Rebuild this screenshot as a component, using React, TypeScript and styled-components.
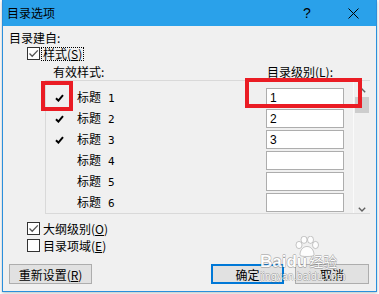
import React from 'react';
import styled, { createGlobalStyle } from 'styled-components';

const GlobalStyle = createGlobalStyle`
  html, body {
    margin: 0;
    padding: 0;
    background: #ffffff;
  }
  body {
    font-family: "Noto Sans CJK SC", "Liberation Sans", sans-serif;
    font-size: 12px;
    color: #000;
  }
`;

const levels = ['1', '2', '3', '', '', ''];

const Check = ({ color = '#3a3a3a' }: { color?: string }) => (
  <svg width="11" height="11" viewBox="0 0 11 11">
    <polyline points="1.5,5.5 4.2,8.2 9.8,2.4" fill="none" stroke={color} strokeWidth="1.3" />
  </svg>
);

const Tick = () => (
  <svg width="9" height="8" viewBox="0 0 9 8">
    <path d="M1 4.2 L3.4 6.6 L8 1.2" fill="none" stroke="#000" strokeWidth="2" />
  </svg>
);

const Chevron = ({ up }: { up?: boolean }) => (
  <svg width="8" height="5" viewBox="0 0 8 5">
    <polyline
      points={up ? '0.8,4.2 4,1 7.2,4.2' : '0.8,0.8 4,4 7.2,0.8'}
      fill="none"
      stroke="#606060"
      strokeWidth="1.4"
    />
  </svg>
);

const Paw = () => (
  <svg width="26" height="22" viewBox="0 0 26 22">
    <g fill="#ffffff" stroke="rgba(110,110,110,0.45)" strokeWidth="0.9">
      <ellipse cx="5" cy="9" rx="3" ry="3.6" />
      <ellipse cx="10" cy="3.8" rx="3" ry="3.6" />
      <ellipse cx="16.5" cy="3.8" rx="3" ry="3.6" />
      <ellipse cx="21.5" cy="9" rx="3" ry="3.6" />
      <path d="M6 19 C6 13, 10 10.5, 13 10.5 C16 10.5, 20 13, 20 19 C20 21, 6 21, 6 19 Z" />
    </g>
  </svg>
);

const App = () => {
  return (
    <Page>
      <GlobalStyle />
      <Window>
        <TitleBar>
          <Title>目录选项</Title>
          <TitleButton>?</TitleButton>
          <TitleButton>
            <svg width="11" height="11" viewBox="0 0 11 11">
              <path d="M0.5 0.5 L10.5 10.5 M10.5 0.5 L0.5 10.5" stroke="#000" strokeWidth="1" />
            </svg>
          </TitleButton>
        </TitleBar>
        <Body>
          <Label>目录建自:</Label>
          <CheckRow $indent={18}>
            <Box>
              <Check color="#555" />
            </Box>
            <Focused>
              样式(<U>S</U>)
            </Focused>
          </CheckRow>
          <HeaderRow>
            <Label>有效样式:</Label>
            <Label>
              目录级别(<U>L</U>):
            </Label>
          </HeaderRow>
          <Panel>
            <List>
              {levels.map((lvl, i) => (
                <Row key={i}>
                  <TickCell>{lvl && <Tick />}</TickCell>
                  <StyleName>
                    标题<Num>{i + 1}</Num>
                  </StyleName>
                  <LevelInput readOnly value={lvl} />
                </Row>
              ))}
            </List>
            <ScrollBar>
              <ArrowBtn $pad={7}>
                <Chevron up />
              </ArrowBtn>
              <Thumb />
              <Track />
              <ArrowBtn $pad={10}>
                <Chevron />
              </ArrowBtn>
            </ScrollBar>
          </Panel>
          <CheckRow $indent={18} $top={7}>
            <Box>
              <Check color="#555" />
            </Box>
            <BoxLabel>
              大纲级别(<U>O</U>)
            </BoxLabel>
          </CheckRow>
          <CheckRow $indent={18} $top={2}>
            <Box />
            <BoxLabel>
              目录项域(<U>E</U>)
            </BoxLabel>
          </CheckRow>
          <ButtonRow>
            <Button $width={83}>
              重新设置(<U>R</U>)
            </Button>
            <ButtonGroup>
              <Button $width={73} $primary>
                确定
              </Button>
              <Button $width={74}>取消</Button>
            </ButtonGroup>
          </ButtonRow>
        </Body>
      </Window>

      {/* 标注框 */}
      <Marker style={{ left: 41, top: 81, width: 32, height: 30 }} />
      <Marker style={{ left: 245, top: 78, width: 117, height: 30 }} />

      <Watermark>
        <PawWrap>
          <Paw />
        </PawWrap>
        <Brand>
          Bai<span>du</span>
          <Cn>经验</Cn>
        </Brand>
        <Site>jingyan.baidu.com</Site>
      </Watermark>
    </Page>
  );
};

const Page = styled.div`
  position: relative;
  width: 379px;
  height: 294px;
  overflow: hidden;
  padding-left: 2px;
  box-sizing: border-box;
  background: #ffffff;
`;

const Window = styled.div`
  width: 375px;
  height: 292px;
  box-sizing: border-box;
  display: flex;
  flex-direction: column;
  border: 1px solid #2a8fdc;
  border-top: none;
  background: #f0f0f0;
  box-shadow: 0 1px 3px rgba(0, 0, 0, 0.28);
`;

const TitleBar = styled.div`
  height: 26px;
  flex-shrink: 0;
  display: flex;
  align-items: center;
  padding-left: 4px;
  background: #2aa1ea;
`;

const Title = styled.div`
  flex: 1;
  font-size: 12px;
  line-height: 16px;
`;

const TitleButton = styled.div`
  width: 46px;
  height: 26px;
  display: flex;
  align-items: center;
  justify-content: center;
  font-family: "Liberation Sans", sans-serif;
  font-size: 14px;
`;

const Body = styled.div`
  flex: 1;
  display: flex;
  flex-direction: column;
  padding: 4px 7px 0 6px;
`;

const Label = styled.div`
  font-size: 12px;
  line-height: 16px;
  height: 16px;
  white-space: nowrap;
`;

const U = styled.span`
  text-decoration: underline;
`;

const CheckRow = styled.div<{ $indent: number; $top?: number }>`
  display: flex;
  align-items: center;
  height: 15px;
  margin-left: ${(p) => p.$indent}px;
  margin-top: ${(p) => p.$top ?? 0}px;
`;

const Box = styled.div`
  width: 13px;
  height: 13px;
  box-sizing: border-box;
  border: 1px solid #333;
  background: #fff;
  display: flex;
  align-items: center;
  justify-content: center;
`;

const BoxLabel = styled.span`
  margin-left: 3px;
  line-height: 15px;
  white-space: nowrap;
`;

const Focused = styled(BoxLabel)`
  margin-left: 2px;
  padding: 0 1px;
  line-height: 12px;
  outline: 1px dotted #000;
`;

const HeaderRow = styled.div`
  margin-top: 3px;
  padding-left: 44px;
  display: grid;
  grid-template-columns: 214px auto;
`;

const Panel = styled.div`
  margin-left: 36px;
  width: 325px;
  height: 134px;
  box-sizing: border-box;
  display: flex;
  border: 1px solid #d9d9d9;
  border-right: none;
`;

const List = styled.div`
  flex: 1;
  display: flex;
  flex-direction: column;
  gap: 2px;
  padding-top: 7px;
  border-right: 1px solid #fafafa;
`;

const Row = styled.div`
  height: 19px;
  display: flex;
  align-items: center;
`;

const TickCell = styled.div`
  width: 31px;
  padding-left: 9px;
  box-sizing: border-box;
  display: flex;
  align-items: center;
`;

const StyleName = styled.div`
  width: 189px;
  line-height: 16px;
`;

const Num = styled.span`
  margin-left: 7px;
  font-family: "DejaVu Sans Mono", monospace;
  font-size: 11px;
`;

const LevelInput = styled.input`
  width: 78px;
  height: 19px;
  box-sizing: border-box;
  margin: 0;
  padding: 0 0 0 3px;
  border: 1px solid #adadad;
  background: #fff;
  font-family: "Liberation Sans", sans-serif;
  font-size: 12px;
  color: #000;
  outline: none;
`;

const ScrollBar = styled.div`
  width: 16px;
  display: flex;
  flex-direction: column;
  background: #f0f0f0;
`;

const ArrowBtn = styled.div<{ $pad: number }>`
  height: 16px;
  box-sizing: border-box;
  padding-top: ${(p) => p.$pad}px;
  display: flex;
  justify-content: center;
  align-items: flex-start;
`;

const Thumb = styled.div`
  height: 16px;
  margin: 0 1px;
  background: #cdcdcd;
`;

const Track = styled.div`
  flex: 1;
`;

const ButtonRow = styled.div`
  margin-top: 11px;
  display: flex;
  align-items: center;
`;

const ButtonGroup = styled.div`
  margin-left: auto;
  display: flex;
  gap: 11px;
`;

const Button = styled.div<{ $width: number; $primary?: boolean }>`
  width: ${(p) => p.$width}px;
  height: 20px;
  box-sizing: border-box;
  display: flex;
  align-items: center;
  justify-content: center;
  background: #e1e1e1;
  border: ${(p) => (p.$primary ? '2px solid #0078d7' : '1px solid #adadad')};
  font-size: 12px;
  white-space: nowrap;
`;

const Marker = styled.div`
  position: absolute;
  box-sizing: border-box;
  border: 4px solid #ea1c24;
`;

const Watermark = styled.div`
  position: absolute;
  left: 260px;
  top: 236px;
  width: 94px;
  opacity: 0.9;
  color: #ffffff;
  pointer-events: none;
`;

const PawWrap = styled.div`
  position: absolute;
  left: 34px;
  top: 0;
`;

const outline = `
  text-shadow:
    0.6px 0 0 rgba(90, 90, 90, 0.4),
    -0.6px 0 0 rgba(90, 90, 90, 0.4),
    0 0.6px 0 rgba(90, 90, 90, 0.4),
    0 -0.6px 0 rgba(90, 90, 90, 0.4);
`;

const Brand = styled.div`
  margin-top: 16px;
  display: flex;
  align-items: baseline;
  font-family: "Liberation Sans", sans-serif;
  font-weight: bold;
  font-size: 17px;
  line-height: 18px;
  ${outline}
`;

const Cn = styled.span`
  margin-left: 2px;
  font-family: "Noto Sans CJK SC", sans-serif;
  font-size: 14px;
  font-weight: normal;
`;

const Site = styled.div`
  font-family: "Liberation Sans", sans-serif;
  font-size: 10px;
  line-height: 12px;
  letter-spacing: 0.3px;
  ${outline}
`;

export default App;
